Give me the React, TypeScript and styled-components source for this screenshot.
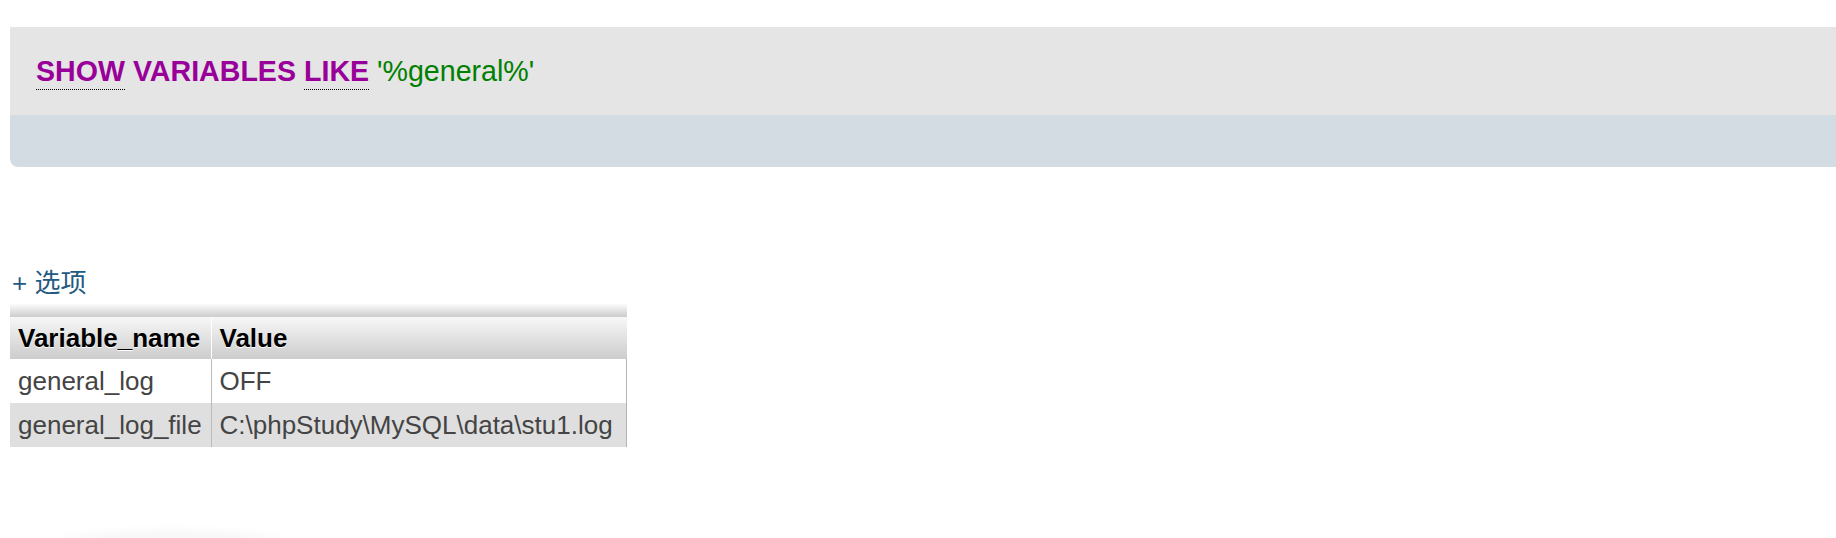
import React from "react";
import styled, { createGlobalStyle } from "styled-components";

const Global = createGlobalStyle`
  html, body {
    margin: 0;
    padding: 0;
    background: #fff;
    overflow: hidden;
  }
  body {
    font-family: "Liberation Sans", Arial, "Noto Sans CJK SC", sans-serif;
    color: #444;
  }
`;

const Page = styled.div`
  padding: 27px 0 0 10px;
  width: 1836px;
  box-sizing: border-box;
`;

const QueryBox = styled.div`
  width: calc(100% + 20px);
  border-bottom-left-radius: 8px;
  overflow: hidden;
`;

const QueryLine = styled.div`
  background: #e5e5e5;
  padding: 28px 26px 27px;
  font-size: 28.6px;
  line-height: 33px;
  white-space: nowrap;
`;

const Keyword = styled.span<{ $doc?: boolean }>`
  color: #990099;
  font-weight: bold;
  ${(p) => (p.$doc ? "border-bottom: 1px dotted #000; padding-bottom: 2px;" : "")}
`;

const Str = styled.span`
  color: #008000;
`;

const Tools = styled.div`
  background: #d3dce3;
  height: 52px;
`;

const Options = styled.div`
  margin-top: 101px;
  font-size: 26px;
  line-height: 30px;
  color: #235a81;
  font-family: "Liberation Sans", Arial, "Noto Sans CJK SC", sans-serif;
  padding-left: 2px;
`;

const Table = styled.table`
  margin-top: 5px;
  border-collapse: collapse;
  table-layout: fixed;
  width: 617px;
  font-size: 26px;
  line-height: 30px;
`;

const BandCell = styled.th`
  height: 14px;
  padding: 0;
  background: linear-gradient(#ffffff, #cccccc);
`;

const Th = styled.th<{ $divider?: boolean }>`
  text-align: left;
  font-weight: bold;
  color: #000;
  text-shadow: 0 1px 0 #fff;
  padding: 6px 8px;
  height: 30px;
  background: linear-gradient(#f7f7f7, #cccccc);
  ${(p) => (p.$divider ? "border-left: 1px solid #fff;" : "")}
`;

const Tr = styled.tr<{ $alt?: boolean }>`
  background: ${(p) => (p.$alt ? "#dfdfdf" : "#ffffff")};
`;

const Td = styled.td`
  padding: 7px 8px;
  height: 30px;
  color: #444;
  white-space: nowrap;
  border-right: 1px solid #b5b5b5;
`;

const Td1 = styled(Td)`
  border-right: 1px solid #bbbbbb;
`;

const Shadow = styled.div`
  margin: 84px 0 0 45px;
  width: 235px;
  height: 30px;
  border-radius: 50%;
  background: rgba(0, 0, 0, 0.035);
  filter: blur(4px);
`;

const rows = [
  ["general_log", "OFF"],
  ["general_log_file", "C:\\phpStudy\\MySQL\\data\\stu1.log"],
];

export default function App() {
  return (
    <>
      <Global />
      <Page>
        <QueryBox>
          <QueryLine>
            <Keyword $doc>SHOW</Keyword> <Keyword>VARIABLES</Keyword>{" "}
            <Keyword $doc>LIKE</Keyword> <Str>'%general%'</Str>
          </QueryLine>
          <Tools />
        </QueryBox>
        <Options>+ 选项</Options>
        <Table>
          <colgroup>
            <col style={{ width: 201 }} />
            <col />
          </colgroup>
          <thead>
            <tr>
              <BandCell colSpan={2} />
            </tr>
            <tr>
              <Th>Variable_name</Th>
              <Th $divider>Value</Th>
            </tr>
          </thead>
          <tbody>
            {rows.map((r, i) => (
              <Tr key={r[0]} $alt={i % 2 === 1}>
                <Td1>{r[0]}</Td1>
                <Td>{r[1]}</Td>
              </Tr>
            ))}
          </tbody>
        </Table>
        <Shadow />
      </Page>
    </>
  );
}
